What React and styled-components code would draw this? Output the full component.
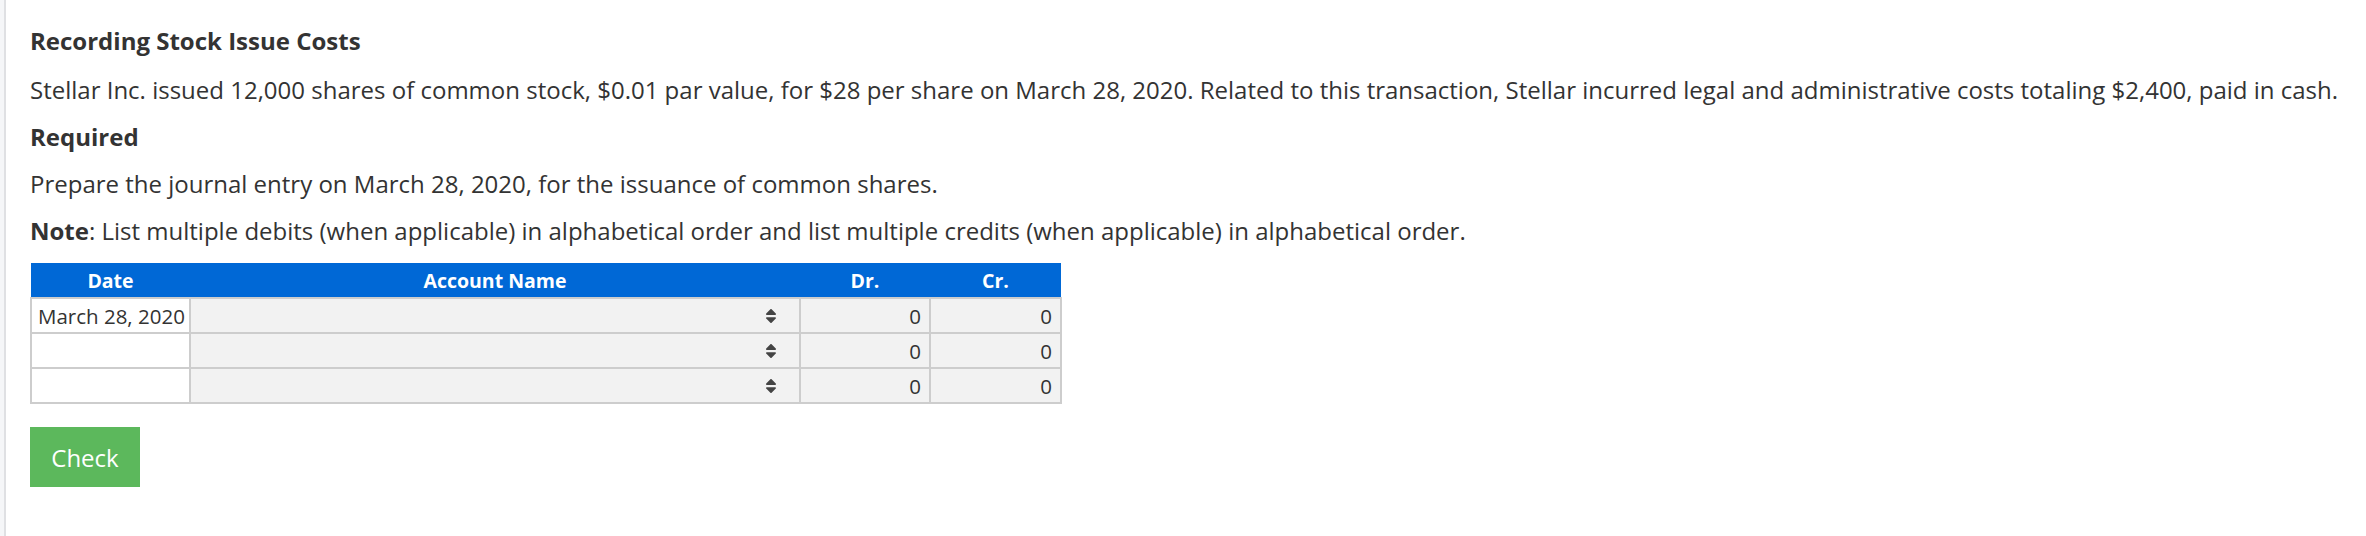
import styled, { createGlobalStyle } from "styled-components";
import { FaSort } from "react-icons/fa";

const GlobalStyle = createGlobalStyle`
	html, body {
		margin: 0;
		padding: 0;
		background: #fff;
	}
	body {
		font-family: "Open Sans", "Liberation Sans", sans-serif;
		color: #333;
	}
`;

const rows = [
	{ date: "March 28, 2020" },
	{ date: "" },
	{ date: "" },
];

const App = () => {
	return (
		<>
			<GlobalStyle />
			<Page>
				<Content>
					<Title>Recording Stock Issue Costs</Title>
					<Text>
						Stellar Inc. issued 12,000 shares of common stock, $0.01 par value, for $28 per share on
						March 28, 2020. Related to this transaction, Stellar incurred legal and administrative
						costs totaling $2,400, paid in cash.
					</Text>
					<Text>
						<b>Required</b>
					</Text>
					<Text>Prepare the journal entry on March 28, 2020, for the issuance of common shares.</Text>
					<Text $last>
						<b>Note</b>: List multiple debits (when applicable) in alphabetical order and list multiple
						credits (when applicable) in alphabetical order.
					</Text>

					<Journal>
						<thead>
							<tr>
								<HeadCell $w={159}>Date</HeadCell>
								<HeadCell $w={610}>Account Name</HeadCell>
								<HeadCell $w={130}>Dr.</HeadCell>
								<HeadCell $w={131}>Cr.</HeadCell>
							</tr>
						</thead>
						<tbody>
							{rows.map((row, i) => (
								<tr key={i}>
									<Cell $white>{row.date}</Cell>
									<Cell>
										<SelectBox>
											<FaSort className="journal__sort" />
										</SelectBox>
									</Cell>
									<Cell $num>0</Cell>
									<Cell $num>0</Cell>
								</tr>
							))}
						</tbody>
					</Journal>

					<CheckButton>Check</CheckButton>
				</Content>
			</Page>
		</>
	);
};

const Page = styled.div`
	min-height: 536px;
	display: flex;
	background: #fff;
	border-left: 4px solid #f5f6f8;
	box-sizing: border-box;
`;

const Content = styled.div`
	flex: 1;
	border-left: 2px solid #dfe0e3;
	padding: 23px 0 0 24px;
`;

const Title = styled.div`
	font-size: 24px;
	line-height: 36px;
	font-weight: 700;
	margin-bottom: 13px;
`;

const Text = styled.p`
	font-size: 24px;
	line-height: 36px;
	margin: 0 0 ${(p) => (p.$last ? "14px" : "11px")};

	> b {
		font-weight: 700;
	}
`;

const Journal = styled.table`
	border-collapse: collapse;
	width: 1030px;
	font-size: 19.5px;
	table-layout: fixed;
`;

const HeadCell = styled.th`
	width: ${(p) => p.$w}px;
	height: 34px;
	padding: 0;
	background: #0068d6;
	color: #fff;
	font-weight: 700;
	text-align: center;
`;

const Cell = styled.td`
	height: 33px;
	padding: 0 8px 0 6px;
	border: 2px solid #cdcdcd;
	background: ${(p) => (p.$white ? "#fff" : "#f2f2f2")};
	text-align: ${(p) => (p.$num ? "right" : "left")};
	font-size: 20.5px;
	color: #333;
	white-space: nowrap;
`;

const SelectBox = styled.div`
	display: flex;
	justify-content: flex-end;
	align-items: center;
	padding-right: 14px;

	> .journal__sort {
		width: 12px;
		height: 18px;
		color: #444;
	}
`;

const CheckButton = styled.button`
	display: block;
	margin-top: 23px;
	width: 110px;
	height: 60px;
	border: none;
	border-radius: 0;
	background: #5cb85c;
	color: #fff;
	font-family: "Open Sans", "Liberation Sans", sans-serif;
	font-size: 24px;
	padding: 0;
`;

export default App;
